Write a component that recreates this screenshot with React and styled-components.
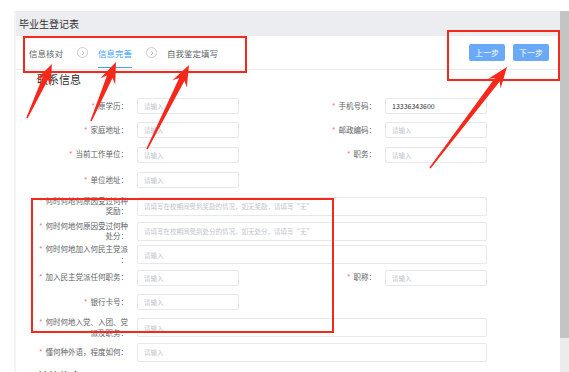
import React from 'react';
import styled, { createGlobalStyle } from 'styled-components';

const GlobalStyle = createGlobalStyle`
	html, body {
		margin: 0;
		padding: 0;
		background: #ffffff;
	}
	body {
		font-family: "Noto Sans CJK SC", "Noto Sans", sans-serif;
		color: #303133;
		overflow: hidden;
	}
`;

const steps = ['信息核对', '信息完善', '自我鉴定填写'];

const rows = [
	{ h: 24, left: { label: '原学历', placeholder: '请输入' }, right: { label: '手机号码', value: '13336343600' } },
	{ h: 24, left: { label: '家庭地址', placeholder: '请输入' }, right: { label: '邮政编码', placeholder: '请输入' } },
	{ h: 25, left: { label: '当前工作单位', placeholder: '请输入' }, right: { label: '职务', placeholder: '请输入' } },
	{ h: 26, left: { label: '单位地址', placeholder: '请输入' } },
	{ h: 26, full: { label: '何时何地何原因受过何种奖励', placeholder: '请填写在校期间受到奖励的情况，如无奖励，请填写“无”', tall: true } },
	{ h: 24, full: { label: '何时何地何原因受过何种处分', placeholder: '请填写在校期间受到处分的情况，如无处分，请填写“无”', tall: true } },
	{ h: 23, full: { label: '何时何地加入何民主党派', placeholder: '请输入', tall: true } },
	{ h: 23, left: { label: '加入民主党派任何职务', placeholder: '请输入' }, right: { label: '职称', placeholder: '请输入' } },
	{ h: 26, left: { label: '银行卡号', placeholder: '请输入' } },
	{ h: 25, full: { label: '何时何地入党、入团、党派及职务', placeholder: '请输入', tall: true } },
	{ h: 24, full: { label: '懂何种外语，程度如何', placeholder: '请输入', tall: true } },
];

function arrowPoints([x1, y1], [x2, y2], head = 21, headW = 16, neck = 6, tail = 1.5) {
	const dx = x2 - x1;
	const dy = y2 - y1;
	const len = Math.hypot(dx, dy);
	const ux = dx / len;
	const uy = dy / len;
	const nx = -uy;
	const ny = ux;
	const wingX = x2 - ux * head;
	const wingY = y2 - uy * head;
	const neckX = x2 - ux * (head - 5);
	const neckY = y2 - uy * (head - 5);
	const p = (x, y) => `${x.toFixed(1)},${y.toFixed(1)}`;
	return [
		p(x1 + (nx * tail) / 2, y1 + (ny * tail) / 2),
		p(neckX + (nx * neck) / 2, neckY + (ny * neck) / 2),
		p(wingX + (nx * headW) / 2, wingY + (ny * headW) / 2),
		p(x2, y2),
		p(wingX - (nx * headW) / 2, wingY - (ny * headW) / 2),
		p(neckX - (nx * neck) / 2, neckY - (ny * neck) / 2),
		p(x1 - (nx * tail) / 2, y1 - (ny * tail) / 2),
	].join(' ');
}

const arrows = [
	[[27, 118], [52, 64]],
	[[91, 121], [116, 62]],
	[[147, 149], [189, 65]],
	[[430, 168], [507, 67]],
];

const boxes = [
	{ x: 24, y: 37, w: 222, h: 35 },
	{ x: 448, y: 31, w: 111, h: 49 },
	{ x: 32, y: 199, w: 301, h: 133 },
];

function Field({ label, placeholder, value, tall, full }) {
	return (
		<FieldWrap full={full}>
			<Label>
				<Star>*</Star>
				{label}：
			</Label>
			<Input tall={tall}>{value ? <Value>{value}</Value> : <Placeholder>{placeholder}</Placeholder>}</Input>
		</FieldWrap>
	);
}

function StepIcon() {
	return (
		<StepCircle>
			<svg width='6' height='6' viewBox='0 0 6 6'>
				<path d='M2 1 L4 3 L2 5' fill='none' stroke='#a8abb2' strokeWidth='0.8' />
			</svg>
		</StepCircle>
	);
}

export default function App() {
	return (
		<Page>
			<GlobalStyle />
			<TopGap />
			<Frame>
				<Gutter />
				<Main>
					<Header>毕业生登记表</Header>
					<TabsBar>
						<Steps>
							{steps.map((item, index) => (
								<React.Fragment key={index}>
									{index > 0 && <StepIcon />}
									<Step active={index === 1}>{item}</Step>
								</React.Fragment>
							))}
						</Steps>
						<Buttons>
							<Button>上一步</Button>
							<Button>下一步</Button>
						</Buttons>
					</TabsBar>

					<Content>
						<SectionTitle>联系信息</SectionTitle>
						<Form>
							{rows.map((row, index) => (
								<Row key={index} h={row.h}>
									{row.full ? (
										<Field {...row.full} full />
									) : (
										<>
											<Field {...row.left} />
											{row.right && <Field {...row.right} />}
										</>
									)}
								</Row>
							))}
						</Form>
						<SectionTitle next>其他信息</SectionTitle>
					</Content>
				</Main>
				<Scrollbar>
					<Thumb />
				</Scrollbar>
			</Frame>

			<Annotations width='569' height='372' viewBox='0 0 569 372'>
				{boxes.map((b, index) => (
					<rect key={index} x={b.x} y={b.y} width={b.w} height={b.h} fill='none' stroke='#f5281c' strokeWidth='2' />
				))}
				{arrows.map((a, index) => (
					<polygon key={index} points={arrowPoints(a[0], a[1])} fill='#f5281c' />
				))}
			</Annotations>
		</Page>
	);
}

const Page = styled.div`
	position: relative;
	width: 569px;
	height: 372px;
	overflow: hidden;
	display: flex;
	flex-direction: column;
`;

const TopGap = styled.div`
	height: 11px;
	flex-shrink: 0;
`;

const Frame = styled.div`
	flex: 1;
	display: flex;
	min-height: 0;
`;

const Gutter = styled.div`
	width: 16px;
	flex-shrink: 0;
`;

const Main = styled.div`
	width: 544px;
	flex-shrink: 0;
	display: flex;
	flex-direction: column;
	box-shadow: -2px 0 0 #f4f4f5;
`;

const Header = styled.div`
	flex-shrink: 0;
	height: 25px;
	line-height: 25px;
	background: #ecedf0;
	padding-left: 3px;
	font-size: 10px;
	color: #303133;
`;

const TabsBar = styled.div`
	flex-shrink: 0;
	height: 33px;
	border-bottom: 1px solid #e9ebef;
	display: flex;
	align-items: center;
	justify-content: space-between;
	padding: 0 11px 0 13px;
`;

const Steps = styled.div`
	display: flex;
	align-items: stretch;
	height: 100%;
`;

const Step = styled.div`
	position: relative;
	display: flex;
	align-items: center;
	font-size: 8.5px;
	color: ${({ active }) => (active ? '#409eff' : '#606266')};

	${({ active }) =>
		active &&
		`
		&::after {
			content: '';
			position: absolute;
			left: 0;
			right: 0;
			bottom: 1px;
			height: 1.5px;
			background: #409eff;
		}
	`}
`;

const StepCircle = styled.div`
	align-self: center;
	width: 9px;
	height: 9px;
	border: 1px solid #c8cbd1;
	border-radius: 50%;
	display: flex;
	align-items: center;
	justify-content: center;
	margin: 0 10px 0 14px;
`;

const Buttons = styled.div`
	display: flex;
	gap: 8px;
`;

const Button = styled.button`
	width: 36px;
	height: 17px;
	padding: 0;
	border: none;
	border-radius: 2px;
	background: #69a9f7;
	color: #ffffff;
	font-family: inherit;
	font-size: 8px;
`;

const Content = styled.div`
	flex-shrink: 0;
`;

const SectionTitle = styled.div`
	height: 18px;
	line-height: 18px;
	padding-left: 21px;
	font-size: 11px;
	color: #303133;
	margin-bottom: 6px;
	${({ next }) => next && `margin-top: 3px;`}
`;

const Form = styled.div`
	padding-left: 16px;
`;

const Row = styled.div`
	height: ${({ h }) => h}px;
	display: grid;
	grid-template-columns: 207px 207px;
	column-gap: 41px;
	align-items: center;
`;

const FieldWrap = styled.div`
	display: flex;
	align-items: center;
	${({ full }) => full && `grid-column: 1 / span 2;`}
`;

const Label = styled.div`
	width: 105px;
	flex-shrink: 0;
	box-sizing: border-box;
	padding-right: 9px;
	text-align: right;
	font-size: 7.5px;
	line-height: 10.5px;
	color: #606266;
	line-break: anywhere;
`;

const Star = styled.span`
	color: #f56c6c;
	margin-right: 3px;
`;

const Input = styled.div`
	flex: 1;
	box-sizing: border-box;
	height: ${({ tall }) => (tall ? 19 : 16)}px;
	border: 1px solid #e6e8ec;
	border-radius: 2px;
	padding-left: 6px;
	display: flex;
	align-items: center;
	overflow: hidden;
	white-space: nowrap;
`;

const Placeholder = styled.span`
	font-size: 6.5px;
	color: #c0c4cc;
`;

const Value = styled.span`
	font-size: 7px;
	color: #303133;
`;

const Scrollbar = styled.div`
	width: 9px;
	flex-shrink: 0;
	background: #ececec;
`;

const Thumb = styled.div`
	height: 327px;
	background: #c4c4c4;
`;

const Annotations = styled.svg`
	position: absolute;
	top: 0;
	left: 0;
	pointer-events: none;
`;
